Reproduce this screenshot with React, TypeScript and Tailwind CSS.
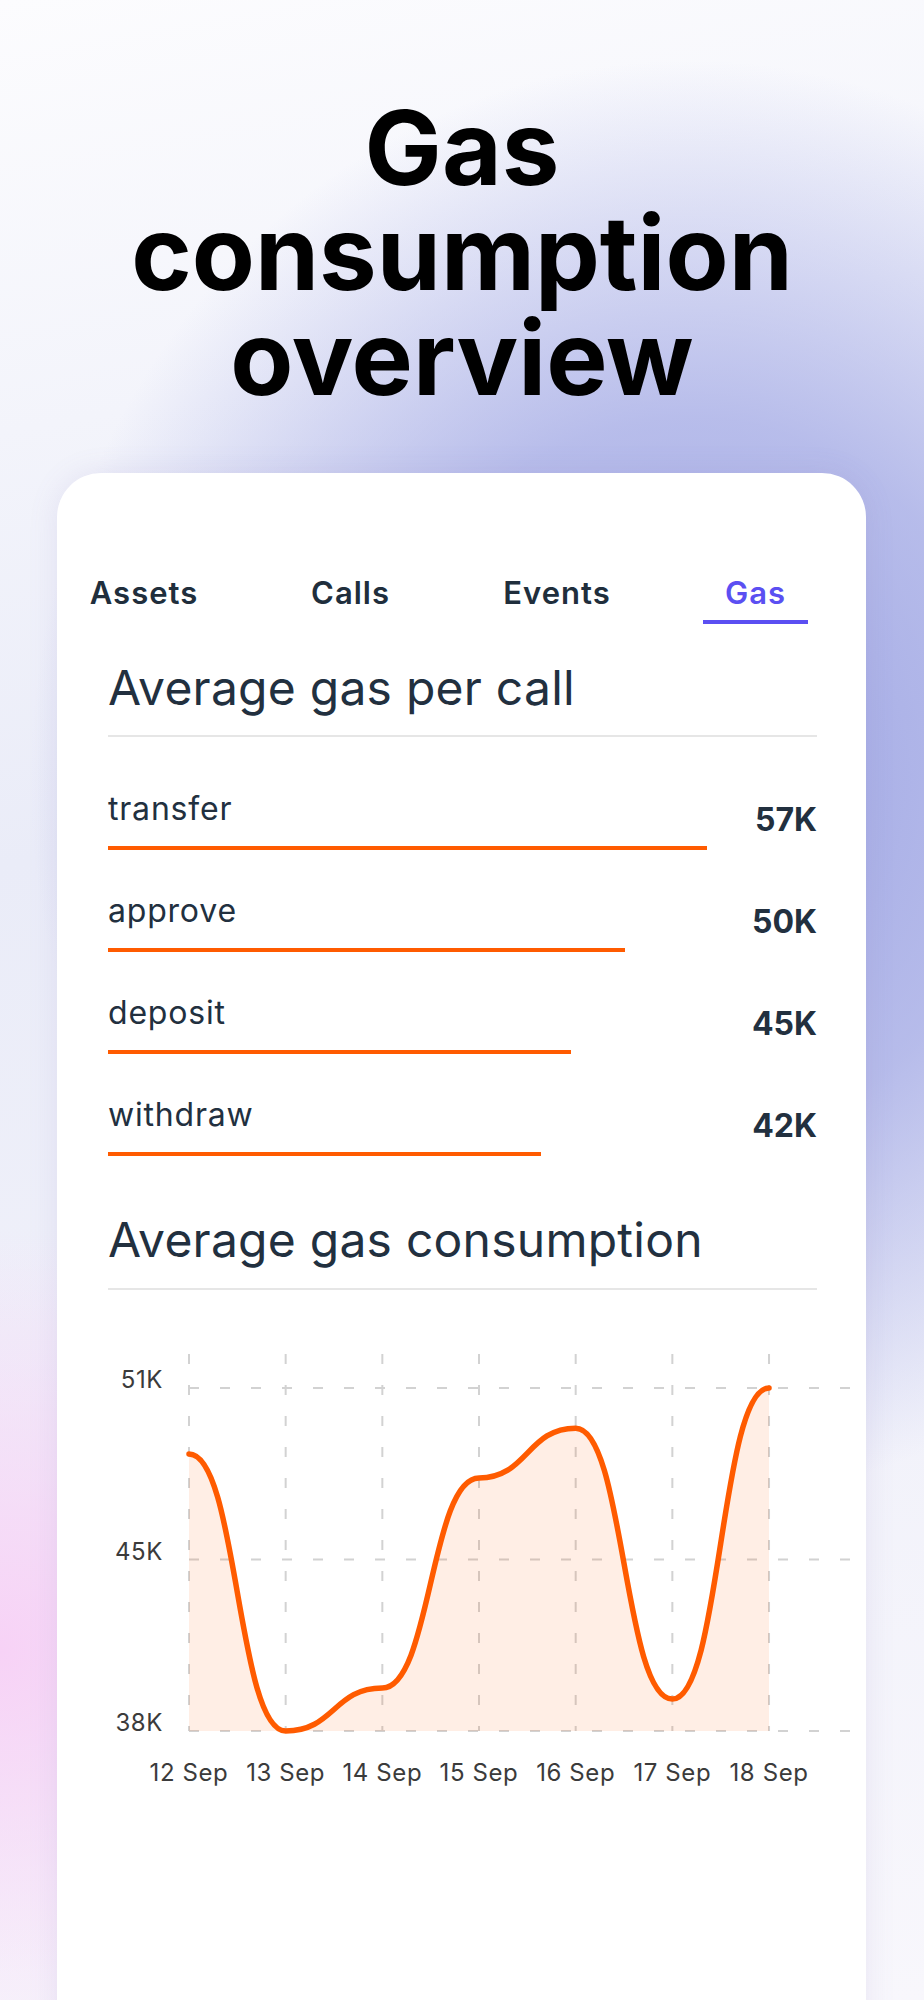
import React from "react";

const rows = [
  { name: "transfer", value: "57K", w: 599 },
  { name: "approve", value: "50K", w: 517 },
  { name: "deposit", value: "45K", w: 463 },
  { name: "withdraw", value: "42K", w: 433 },
];

const days = ["12 Sep", "13 Sep", "14 Sep", "15 Sep", "16 Sep", "17 Sep", "18 Sep"];
const values = [48.5, 38.0, 39.63, 47.59, 49.48, 39.21, 51.0];

const X0 = 132;
const STEP = 96.67;
const yOf = (v: number) => 218.5 - (v - 44.5) * 26.38;

function horizontalBezier(pts: [number, number][]) {
  let d = `M${pts[0][0]},${pts[0][1]}`;
  for (let i = 1; i < pts.length; i++) {
    const [x0, y0] = pts[i - 1];
    const [x1, y1] = pts[i];
    const mx = x0 + (x1 - x0) / 2;
    d += ` C${mx},${y0} ${mx},${y1} ${x1},${y1}`;
  }
  return d;
}

function Chart() {
  const pts: [number, number][] = values.map((v, i) => [X0 + i * STEP, yOf(v)]);
  const line = horizontalBezier(pts);
  const lastX = X0 + 6 * STEP;
  const area = `${line} L${lastX},390 L${X0},390 Z`;
  const hLines = [47, 218.5, 390];
  const yLabels = ["51K", "45K", "38K"];
  return (
    <svg width={809} height={460} className="block -ml-[51px] mt-[51px]">
      {days.map((_, i) => (
        <line
          key={"v" + i}
          x1={X0 + i * STEP}
          x2={X0 + i * STEP}
          y1={13}
          y2={390}
          stroke="#d2d2d2"
          strokeWidth={2}
          strokeDasharray="10 21"
        />
      ))}
      {hLines.map((y, i) => (
        <line
          key={"h" + i}
          x1={X0}
          x2={798}
          y1={y}
          y2={y}
          stroke="#d2d2d2"
          strokeWidth={2}
          strokeDasharray="10 21"
        />
      ))}
      <path d={area} fill="#ff5b00" fillOpacity={0.1} />
      <path d={line} fill="none" stroke="#ff5b00" strokeWidth={5.5} strokeLinecap="round" strokeLinejoin="round" />
      {yLabels.map((l, i) => (
        <text
          key={l}
          x={106}
          y={hLines[i]}
          textAnchor="end"
          fontSize={24}
          letterSpacing={0.6}
          fill="#3b3b3b"
          fontFamily="Inter, 'Noto Sans', sans-serif"
        >
          {l}
        </text>
      ))}
      {days.map((d, i) => (
        <text
          key={d}
          x={X0 + i * STEP}
          y={440}
          textAnchor="middle"
          fontSize={24}
          letterSpacing={0.6}
          fill="#3b3b3b"
          fontFamily="Inter, 'Noto Sans', sans-serif"
        >
          {d}
        </text>
      ))}
    </svg>
  );
}

const tabs = [
  { t: "Assets", cls: "w-[206px]" },
  { t: "Calls", cls: "w-[207px]" },
  { t: "Events", cls: "w-[206px]" },
  { t: "Gas", cls: "w-[105px] ml-[43px]" },
];

export default function App() {
  return (
    <div
      className="relative w-[924px] h-[2000px] overflow-hidden font-['Inter','Noto_Sans',sans-serif] bg-[radial-gradient(ellipse_660px_720px_at_690px_780px,#9fa6e4_0%,rgba(159,166,228,0.7)_50%,rgba(159,166,228,0)_100%),radial-gradient(ellipse_430px_420px_at_0px_1650px,#f7d2f6_0%,rgba(247,210,246,0)_100%),linear-gradient(170deg,#fcfcfe_0%,#eaecf8_40%,#f8f7fc_100%)]"
    >
      <h1 className="pt-[95px] text-center text-[103px] leading-[105px] font-bold text-black">
        Gas
        <br />
        consumption
        <br />
        overview
      </h1>

      <div className="ml-[57px] mt-[63px] w-[809px] h-[1600px] rounded-t-[44px] bg-white pt-[102px] pl-[51px] pr-[49px] shadow-[0_0_30px_rgba(120,110,180,0.12)]">
        <div className="-ml-[67px] flex">
          {tabs.map(({ t, cls }) => {
            const active = t === "Gas";
            return (
              <div key={t} className={`flex flex-col ${cls}`}>
                <div
                  className={`text-center text-[31px] leading-[36px] font-semibold tracking-[1px] ${
                    active ? "text-[#5b4ff2]" : "text-[#202e3c]"
                  }`}
                >
                  {t}
                </div>
                <div className={`mt-[9px] h-[4px] ${active ? "bg-[#5b4ff2]" : "bg-transparent"}`} />
              </div>
            );
          })}
        </div>

        <h2 className="mt-[36px] text-[48px] leading-[56px] font-normal tracking-[0.005em] text-[#22303f]">
          Average gas per call
        </h2>
        <div className="mt-[19px] h-[2px] bg-[#e6e6e6]" />

        <div className="mt-[52px] flex flex-col gap-[41px]">
          {rows.map((r) => (
            <div key={r.name} className="flex items-center justify-between">
              <div className="flex flex-col">
                <div className="text-[32px] leading-[40px] tracking-[0.8px] text-[#22303f]">{r.name}</div>
                <div className="mt-[17px] h-[4px] bg-[#ff5b00]" style={{ width: r.w }} />
              </div>
              <div className="text-[32px] leading-[40px] font-bold text-[#22303f]">{r.value}</div>
            </div>
          ))}
        </div>

        <h2 className="mt-[56px] text-[48px] leading-[56px] font-normal tracking-[0.005em] text-[#22303f]">
          Average gas consumption
        </h2>
        <div className="mt-[20px] h-[2px] bg-[#e6e6e6]" />

        <Chart />
      </div>
    </div>
  );
}
